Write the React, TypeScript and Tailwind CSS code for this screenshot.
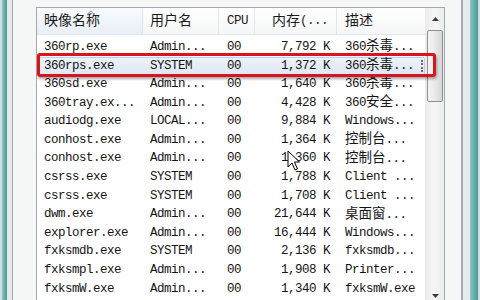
import React from 'react';

type Row = [string, string, string, string, string];

const rows: Row[] = [
  ['360rp.exe', 'Admin...', '00', '7,792 K', '360杀毒...'],
  ['360rps.exe', 'SYSTEM', '00', '1,372 K', '360杀毒...'],
  ['360sd.exe', 'Admin...', '00', '1,640 K', '360杀毒...'],
  ['360tray.ex...', 'Admin...', '00', '4,428 K', '360安全...'],
  ['audiodg.exe', 'LOCAL...', '00', '9,884 K', 'Windows...'],
  ['conhost.exe', 'Admin...', '00', '1,364 K', '控制台...'],
  ['conhost.exe', 'Admin...', '00', '1,360 K', '控制台...'],
  ['csrss.exe', 'SYSTEM', '00', '1,788 K', 'Client ...'],
  ['csrss.exe', 'SYSTEM', '00', '1,708 K', 'Client ...'],
  ['dwm.exe', 'Admin...', '00', '21,644 K', '桌面窗...'],
  ['explorer.exe', 'Admin...', '00', '16,444 K', 'Windows...'],
  ['fxksmdb.exe', 'SYSTEM', '00', '2,136 K', 'fxksmdb...'],
  ['fxksmpl.exe', 'Admin...', '00', '1,908 K', 'Printer...'],
  ['fxksmW.exe', 'Admin...', '00', '1,340 K', 'fxksmW.exe'],
];

const FONT = { fontFamily: '"Liberation Mono", "Noto Sans CJK SC", monospace' };

// SimSun-like look: latin half width, CJK a bit bigger
function Mixed({ s, big }: { s: string; big?: boolean }) {
  return (
    <>
      {s.split(/([\u4e00-\u9fff]+)/).map((p, i) =>
        /[\u4e00-\u9fff]/.test(p) ? (
          <span key={i} className={big ? 'text-[14px] tracking-normal' : 'text-[13.5px] tracking-normal'}>{p}</span>
        ) : (
          <React.Fragment key={i}>{p}</React.Fragment>
        )
      )}
    </>
  );
}

function Header() {
  return (
    <div className="flex h-[27px] border-b border-[#e4e7eb] text-[12.5px] tracking-[-0.5px] text-[#1b1b1b]">
      <div className="relative flex w-[106px] items-center border-r border-[#dfe3e8] bg-gradient-to-b from-[#f8fbfe] to-[#e9eff6] pl-[7px]">
        <svg className="absolute left-[50px] top-[2px]" width="8" height="5" viewBox="0 0 8 5">
          <polyline points="0.5,4.5 4,1 7.5,4.5" fill="none" stroke="#9aa6b4" strokeWidth="1.2" />
        </svg>
        <Mixed s="映像名称" big />
      </div>
      <div className="flex w-[76px] items-center border-r border-[#e3e6ea] bg-gradient-to-b from-white to-[#f5f6f7] pl-[7px]">
        <Mixed s="用户名" big />
      </div>
      <div className="flex w-[36px] items-center border-r border-[#e3e6ea] bg-gradient-to-b from-white to-[#f5f6f7] pl-[8px]">
        CPU
      </div>
      <div className="flex w-[82px] items-center justify-end border-r border-[#e3e6ea] bg-gradient-to-b from-white to-[#f5f6f7] pr-[8px]">
        <Mixed s="内存(..." big />
      </div>
      <div className="flex w-[88px] items-center bg-gradient-to-b from-white to-[#f5f6f7] pl-[8px]">
        <Mixed s="描述" big />
      </div>
    </div>
  );
}

function ProcRow({ r, selected }: { r: Row; selected?: boolean }) {
  return (
    <div
      className={
        selected
          ? 'relative flex h-[18.6px] items-center rounded-[2px] bg-gradient-to-b from-[#eef3fa] to-[#dde7f3] shadow-[inset_0_0_0_1px_#bccfe6]'
          : 'flex h-[18.6px] items-center'
      }
    >
      <div className="w-[106px] overflow-hidden whitespace-nowrap pl-[7px]">{r[0]}</div>
      <div className="w-[76px] overflow-hidden whitespace-nowrap pl-[7px]">{r[1]}</div>
      <div className="w-[36px] overflow-hidden whitespace-nowrap pl-[8px]">{r[2]}</div>
      <div className="w-[82px] overflow-hidden whitespace-nowrap pr-[7px] text-right">{r[3]}</div>
      <div className="w-[88px] overflow-hidden whitespace-nowrap pl-[8px]">
        <Mixed s={r[4]} />
      </div>
      {selected && <div className="absolute right-[2px] top-[3px] h-[12px] border-l-2 border-dotted border-[#6a6a6a]" />}
    </div>
  );
}

function Scrollbar() {
  return (
    <div className="flex w-[19px] flex-col border-l border-[#ebebeb] bg-gradient-to-r from-[#ececec] via-[#f7f7f7] to-[#ececec]">
      <div className="flex h-[21px] items-center justify-center">
        <svg width="7" height="4" viewBox="0 0 7 4">
          <polygon points="0,4 3.5,0 7,4" fill="#3b3b3b" />
        </svg>
      </div>
      <div className="mx-[1px] mt-[1px] h-[72px] rounded-[2px] border border-[#8f9090] bg-gradient-to-r from-[#f4f4f4] via-[#e9e9e9] to-[#d6d6d6]" />
      <div className="flex-1" />
      <div className="flex h-[20px] items-center justify-center">
        <svg width="7" height="4" viewBox="0 0 7 4">
          <polygon points="0,0 3.5,4 7,0" fill="#3b3b3b" />
        </svg>
      </div>
    </div>
  );
}

export default function App() {
  return (
    <div className="relative flex h-[300px] w-[480px] overflow-hidden bg-[#f5f6f6]" style={FONT}>
      {/* left window frame */}
      <div className="flex h-full w-[13px] shrink-0">
        <div className="w-[2px] bg-[#d3dfdf]" />
        <div className="w-[5px] bg-gradient-to-r from-[#8cc6c6] to-[#45979a]" />
        <div className="w-[5px] bg-[#e6ebec]" />
        <div className="w-px bg-[#a3abae]" />
      </div>

      <div className="flex-1 pl-[23px] pr-[16px] pt-[7px]">
        <div className="flex h-[300px] border border-[#a3a8ae] bg-white">
          <div className="w-[388px] shrink-0 text-[12.5px] tracking-[-0.5px] text-[#141414]">
            <Header />
            <div className="pt-[3px]">
              {rows.map((r, i) => (
                <ProcRow key={i} r={r} selected={i === 1} />
              ))}
            </div>
          </div>
          <Scrollbar />
        </div>
      </div>

      {/* right window frame */}
      <div className="flex h-full w-[19px] shrink-0">
        <div className="w-[2px] bg-[#a3abae]" />
        <div className="w-[7px] bg-[#e6ebec]" />
        <div className="w-[8px] bg-gradient-to-r from-[#8cc6c6] to-[#45979a]" />
        <div className="w-[2px] bg-[#d3dfdf]" />
      </div>

      {/* red annotation box */}
      <div className="absolute left-[37px] top-[53px] h-[24px] w-[399px] rounded-[3px] border-[3px] border-[#d9141c] shadow-[1px_2px_3px_rgba(0,0,0,0.35)]" />

      {/* mouse pointer */}
      <svg className="absolute left-[287px] top-[150px]" width="14" height="22" viewBox="0 0 14 22">
        <path d="M1 1 L1 17 L5 13 L8 20 L10.5 19 L7.5 12 L12.5 12 Z" fill="#fff" stroke="#000" strokeWidth="1" strokeLinejoin="round" />
      </svg>
    </div>
  );
}
